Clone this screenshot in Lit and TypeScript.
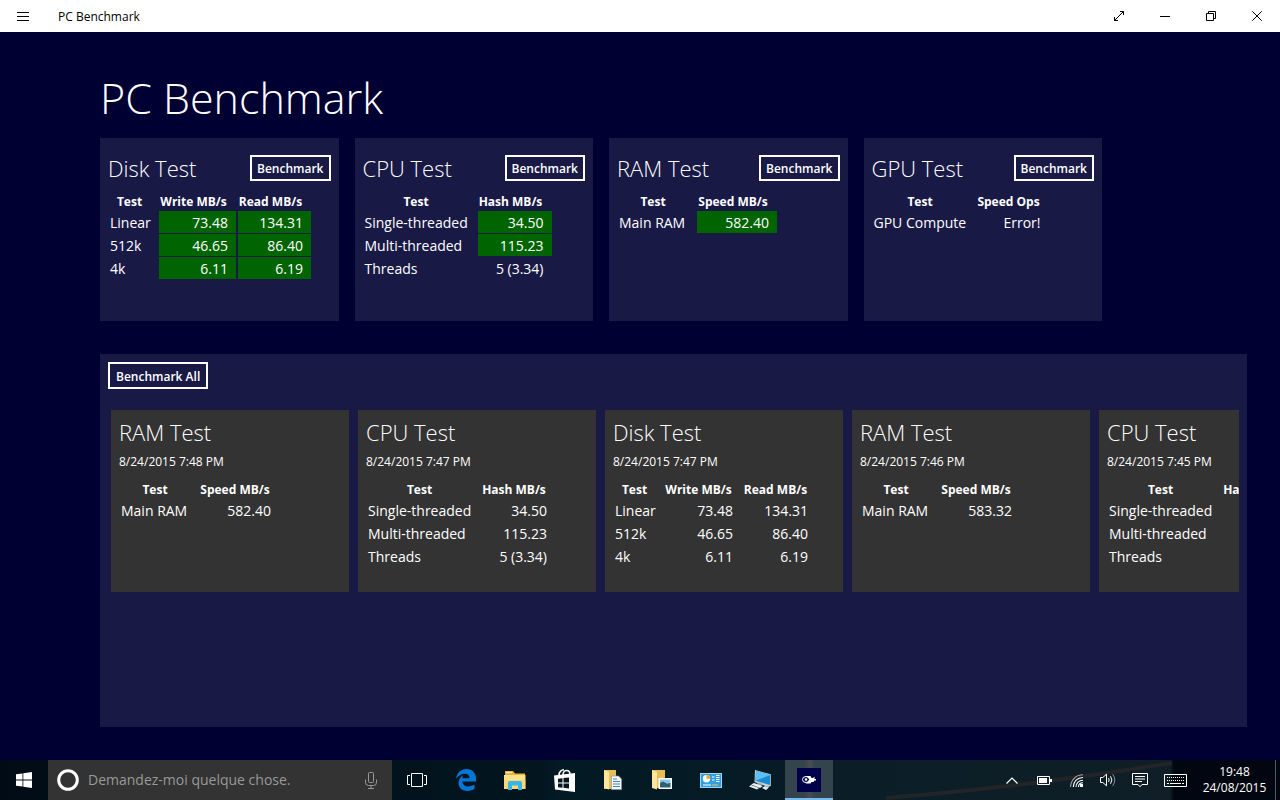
import { LitElement, html, css, svg, nothing } from "lit";
import { customElement, property } from "lit/decorators.js";
import { classMap } from "lit/directives/class-map.js";
import { styleMap } from "lit/directives/style-map.js";

interface Cell {
  text: string;
  good?: boolean;
}
interface Column {
  label: string;
  width: number;
}
interface TestResult {
  title: string;
  date?: string;
  columns: Column[];
  rows: Cell[][];
}

const good = (text: string): Cell => ({ text, good: true });
const plain = (text: string): Cell => ({ text });

const DISK_COLUMNS: Column[] = [
  { label: "Test", width: 47 },
  { label: "Write MB/s", width: 77 },
  { label: "Read MB/s", width: 73 },
];
const CPU_COLUMNS: Column[] = [
  { label: "Test", width: 111 },
  { label: "Hash MB/s", width: 74 },
];
const RAM_COLUMNS: Column[] = [
  { label: "Test", width: 76 },
  { label: "Speed MB/s", width: 80 },
];
const GPU_COLUMNS: Column[] = [
  { label: "Test", width: 101 },
  { label: "Speed Ops", width: 72 },
];

const CURRENT: TestResult[] = [
  {
    title: "Disk Test",
    columns: DISK_COLUMNS,
    rows: [
      [plain("Linear"), good("73.48"), good("134.31")],
      [plain("512k"), good("46.65"), good("86.40")],
      [plain("4k"), good("6.11"), good("6.19")],
    ],
  },
  {
    title: "CPU Test",
    columns: CPU_COLUMNS,
    rows: [
      [plain("Single-threaded"), good("34.50")],
      [plain("Multi-threaded"), good("115.23")],
      [plain("Threads"), plain("5 (3.34)")],
    ],
  },
  {
    title: "RAM Test",
    columns: RAM_COLUMNS,
    rows: [[plain("Main RAM"), good("582.40")]],
  },
  {
    title: "GPU Test",
    columns: GPU_COLUMNS,
    rows: [[plain("GPU Compute"), plain("Error!")]],
  },
];

const cpuRows = (): Cell[][] => [
  [plain("Single-threaded"), plain("34.50")],
  [plain("Multi-threaded"), plain("115.23")],
  [plain("Threads"), plain("5 (3.34)")],
];

const HISTORY: TestResult[] = [
  {
    title: "RAM Test",
    date: "8/24/2015 7:48 PM",
    columns: RAM_COLUMNS,
    rows: [[plain("Main RAM"), plain("582.40")]],
  },
  {
    title: "CPU Test",
    date: "8/24/2015 7:47 PM",
    columns: CPU_COLUMNS,
    rows: cpuRows(),
  },
  {
    title: "Disk Test",
    date: "8/24/2015 7:47 PM",
    columns: DISK_COLUMNS,
    rows: [
      [plain("Linear"), plain("73.48"), plain("134.31")],
      [plain("512k"), plain("46.65"), plain("86.40")],
      [plain("4k"), plain("6.11"), plain("6.19")],
    ],
  },
  {
    title: "RAM Test",
    date: "8/24/2015 7:46 PM",
    columns: RAM_COLUMNS,
    rows: [[plain("Main RAM"), plain("583.32")]],
  },
  {
    title: "CPU Test",
    date: "8/24/2015 7:45 PM",
    columns: CPU_COLUMNS,
    rows: cpuRows(),
  },
];

@customElement("test-card")
class TestCard extends LitElement {
  @property({ attribute: false }) result!: TestResult;

  static styles = css`
    :host {
      display: block;
      box-sizing: border-box;
      min-height: 183px;
      padding: 8px;
      background: #191946;
      color: #fff;
    }
    :host([past]) {
      min-height: 182px;
      background: #333;
    }
    .head {
      display: flex;
      align-items: center;
      justify-content: space-between;
      height: 44px;
    }
    :host([past]) .head {
      height: 28px;
    }
    h2 {
      margin: 0;
      font-size: 22px;
      line-height: 28px;
      font-weight: 300;
    }
    button {
      height: 26px;
      padding: 2px 5px 0;
      border: 2px solid #fff;
      background: transparent;
      color: #fff;
      font: 600 12px/20px var(--ui-font);
    }
    time {
      display: block;
      margin: 8px 0;
      font-size: 12px;
      line-height: 16px;
    }
    table {
      border-spacing: 2px 1px;
      font-size: 14px;
      line-height: 20px;
      white-space: nowrap;
    }
    th {
      box-sizing: border-box;
      padding: 2px 8px 0 0;
      font-size: 12px;
      line-height: 17px;
      font-weight: 700;
      text-align: center;
    }
    td {
      padding: 2px 8px 0 0;
      text-align: right;
    }
    td:first-child {
      padding-right: 6px;
      text-align: left;
    }
    .good {
      background: #006400;
    }
  `;

  render() {
    const r = this.result;
    return html`
      <div class="head">
        <h2>${r.title}</h2>
        ${r.date ? nothing : html`<button type="button">Benchmark</button>`}
      </div>
      ${r.date ? html`<time>${r.date}</time>` : nothing}
      <table>
        <thead>
          <tr>
            ${r.columns.map(
              (c) => html`<th scope="col" style=${styleMap({ width: `${c.width}px` })}>${c.label}</th>`
            )}
          </tr>
        </thead>
        <tbody>
          ${r.rows.map(
            (row) => html`<tr>
              ${row.map(
                (c) => html`<td class=${classMap({ good: !!c.good })}>${c.text}</td>`
              )}
            </tr>`
          )}
        </tbody>
      </table>
    `;
  }
}

const icon = (w: number, h: number, body: unknown) =>
  html`<svg width=${w} height=${h} viewBox="0 0 ${w} ${h}" aria-hidden="true">${body}</svg>`;

const menuIcon = icon(12, 9, svg`<path d="M0 .5h12M0 4.5h12M0 8.5h12" stroke="#000" />`);
const windowButtons = [
  {
    label: "Full screen",
    art: icon(10, 10, svg`<path d="M.5 6v3.500h3.500M6 .5h3.500v3.500M.5 9.500l9-9" fill="none" stroke="#000" />`),
  },
  { label: "Minimize", art: icon(10, 10, svg`<path d="M0 5.500h10" stroke="#000" />`) },
  {
    label: "Restore",
    art: icon(10, 10, svg`<path d="M.5 2.500h7v7h-7zM2.500 2.500v-2h7v7h-2" fill="none" stroke="#000" />`),
  },
  {
    label: "Close",
    art: icon(10, 10, svg`<path d="M.3 .3l9.400 9.400M9.700 .3l-9.400 9.400" stroke="#000" />`),
  },
];

const windowsLogo = icon(
  16,
  16,
  svg`<path fill="#fff" d="M0 2.300L6.500 1.400V7.500H0zM7.300 1.300L16 0V7.500H7.300zM0 8.400H6.500V14.600L0 13.700zM7.300 8.400H16V16L7.300 14.700z" />`
);
const cortanaRing = icon(
  22,
  22,
  svg`<circle cx="11" cy="11" r="9.300" fill="none" stroke="#fff" stroke-width="3" />`
);
const micIcon = icon(
  12,
  17,
  svg`<g fill="none" stroke="#999"><rect x="3.500" y=".5" width="5" height="10" rx="1" /><path d="M.5 7.500v3q0 3 3 3h5q3 0 3-3v-3M6 13.500v3M3 16.500h6" /></g>`
);

const taskIcons = [
  {
    label: "Task View",
    art: icon(20, 14, svg`<path d="M4.500 .5h11v13h-11zM3 2.500H.5v9H3M17 2.500h2.500v9H17" fill="none" stroke="#fff" />`),
  },
  {
    label: "Edge",
    art: icon(
      20,
      22,
      svg`<path fill="#0078d7" d="M0 9.800C.8 4.300 4.600 0 10.600 0c5.700 0 9.400 4.200 9.400 9.400v3H6.400c.2 3.300 2.600 5 6 5 2.300 0 4.300-.6 6.100-1.800v4.500c-2 1.200-4.500 1.800-7.100 1.800C5.800 21.900 2.600 18.500 2.500 14.200c0-3.700 2.100-6.500 5-7.900-.8 1-1.100 2.100-1.200 3h7.300c0-2.800-1.500-4.600-4.700-4.600C5.400 4.700 2 6.800 0 9.800z" />`
    ),
  },
  {
    label: "File Explorer",
    art: icon(
      22,
      19,
      svg`<path fill="#e8b63a" d="M1 0h8l2 2.500h10V9H1z" /><path fill="#fff3c4" d="M2 1h6v1H2z" /><path fill="#ffe08a" d="M0 4h21.500v14H0z" /><path fill="#f5cd62" d="M0 9h21.500v9H0z" opacity=".5" /><path fill="#35b5e9" d="M4 19v-7q0-2 2-2h10q2 0 2 2v7h-4v-4.500H8V19z" />`
    ),
  },
  {
    label: "Store",
    art: icon(
      21,
      23,
      svg`<path fill="#fff" d="M0 6.500L21 4v19L1 20.500z" /><path d="M5 6.500C5 2.500 7.500.8 10 .8M9 6.500c0-3.500 1.500-5 3.500-5s3.500 1.500 3.500 4" fill="none" stroke="#fff" stroke-width="1.600" /><path fill="#03151e" d="M4 9.700l4.500-.5v4.300H4zM9.500 9.100l5.500-.6v5H9.500zM4 14.500h4.500v4.200L4 18.300zM9.500 14.500H15v4.900l-5.500-.6z" />`
    ),
  },
  {
    label: "Documents",
    art: icon(
      18,
      20,
      svg`<path fill="#e9bd55" d="M0 0h12v19H0z" /><path fill="#ffe59c" d="M0 0l5 2v17.500L0 18z" /><path fill="#f6f8fa" stroke="#8d9aa5" stroke-width=".7" d="M7.500 6h7l3 3v10.500h-10z" /><path d="M9 9h4M9 11.500h7M9 14h7M9 16.500h7" stroke="#3c83c5" />`
    ),
  },
  {
    label: "Pictures",
    art: icon(
      20,
      20,
      svg`<path fill="#e9bd55" d="M0 0h13v18H0z" /><path fill="#ffe59c" d="M0 0l5 2v17.500L0 18z" /><path fill="#fff" d="M6.500 8H20v11H6.500z" /><path fill="#8cc4ec" d="M8 9.500h10.500v4H8z" /><path fill="#2d6076" d="M8 13l3-1.500 4 2 3.500-.5v4.500H8z" />`
    ),
  },
  {
    label: "Control Panel",
    art: icon(
      22,
      15,
      svg`<path fill="#9ad5f5" d="M0 0h22v15H0z" /><path fill="#2f9fe0" d="M1 1h20v13H1z" /><circle cx="6.500" cy="5.700" r="3.700" fill="#fff" /><path fill="#f4a524" d="M6.500 5.700V2a3.700 3.700 0 0 1 3.700 3.700z" /><path d="M12 4h2.500M12 7h2.500M16 2.500h3.500M16 4.500h3.500M16 6.500h3.500M16 8.500h3.500M3 12h8" stroke="#fff" /><path d="M12 12h6" stroke="#f4c35a" />`
    ),
  },
  {
    label: "This PC",
    art: icon(
      22,
      20,
      svg`<path fill="#c3d3dc" d="M6 0L21.800 4.300V16L19 17 5.500 12z" /><path fill="#1b8ad3" d="M7 1L21 5v10L6.500 10.800z" /><path fill="#5bbff3" d="M7 1L21 5 6.500 10.800z" /><path fill="#9aa3a8" d="M9 12.500l4 1.300-1 1.700-4-1.300z" /><path fill="#e9ecee" d="M2 14.500l3-1.500 9 3-3 2zM0 16.500l2-1.500 8 3-2 1.500zM13 18l3-2 4 1.500-3 2.500z" />`
    ),
  },
];

const benchmarkIcon = icon(
  24,
  24,
  svg`<path fill="#00004b" d="M0 0h24v24H0z" /><ellipse cx="9" cy="11.500" rx="3.500" ry="3" fill="none" stroke="#fff" /><circle cx="9" cy="11.500" r="1.300" fill="#fff" /><path fill="#fff" d="M9 8h4.500l1 2h2v-1h1v2h1.500v1.500h-1.500l-1 1.500h-2l-1 1.500H8.500l3-2.500 1-2z" />`
);

const trayIcons = [
  {
    label: "Show hidden icons",
    slot: "",
    art: icon(12, 7, svg`<path d="M.5 6.500L6 1l5.500 5.500" fill="none" stroke="#fff" stroke-width="1.200" />`),
  },
  {
    label: "Battery",
    slot: "",
    art: icon(15, 9, svg`<path d="M.5 .5h12v8H.5z" fill="none" stroke="#fff" /><path fill="#fff" d="M2 2h8v5H2zM13 3h2v3h-2z" />`),
  },
  {
    label: "Network",
    slot: "",
    art: icon(
      13,
      13,
      svg`<g fill="none" stroke="#fff" stroke-width="1.100"><path d="M.6 13C.6 6 6 .8 13 .8" opacity=".6" /><path d="M3.300 13C3.300 7.500 7.500 3.500 13 3.500M6 13c0-4 3-6.800 7-6.800M8.500 13c0-2.500 2-4.200 4.500-4.200" /></g><path fill="#fff" d="M10 10h3v3h-3z" />`
    ),
  },
  {
    label: "Volume",
    slot: "",
    art: icon(
      16,
      14,
      svg`<g fill="none" stroke="#fff"><path d="M.5 4.500h2.300L6.500 1.200v11.600L2.800 9.500H.5z" /><path d="M8.500 5q1.400 2 0 4M10.500 3.200q2.800 3.800 0 7.600" /><path d="M12.700 1.200q4.200 5.800 0 11.600" opacity=".5" /></g>`
    ),
  },
  {
    label: "Notifications",
    slot: "",
    art: icon(
      16,
      15,
      svg`<path d="M.5 .5h15v11H10l-2 2.300-2-2.300H.5zM3 3.500h10M3 6h10M3 8.500h7" fill="none" stroke="#fff" />`
    ),
  },
  {
    label: "Touch keyboard",
    slot: "wide",
    art: icon(
      23,
      13,
      svg`<path d="M.5 .5h22v12H.5z" fill="none" stroke="#fff" /><path d="M3 3.500h17M3 6.500h17" stroke="#fff" stroke-dasharray="1 1" /><path d="M3 9.500h2M6 9.500h11M18 9.500h2" stroke="#fff" />`
    ),
  },
];

@customElement("task-bar")
class TaskBar extends LitElement {
  static styles = css`
    :host {
      position: relative;
      display: flex;
      align-items: stretch;
      height: 40px;
      color: #fff;
      background: linear-gradient(90deg, #000b15 0, #02131d 420px, #03151f 540px, #021a24 556px, #061b25 800px, #0b1e27 840px, #0f1e27 1170px, #020610 1174px);
    }
    .streak {
      position: absolute;
      right: 108px;
      bottom: 0;
      width: 336px;
      height: 40px;
    }
    svg {
      display: block;
    }
    button {
      display: flex;
      align-items: center;
      justify-content: center;
      padding: 0;
      border: 0;
      background: transparent;
      color: inherit;
      font: inherit;
    }
    .start {
      width: 48px;
    }
    .search {
      display: flex;
      align-items: center;
      gap: 9px;
      width: 344px;
      box-sizing: border-box;
      padding: 0 15px 0 9px;
      background: #333;
    }
    .search input {
      flex: 1;
      min-width: 0;
      padding: 0;
      border: 0;
      outline: 0;
      background: transparent;
      color: #fff;
      font: 14px/24px var(--ui-font);
    }
    .search input::placeholder {
      color: #999;
      opacity: 1;
    }
    .apps {
      display: flex;
      gap: 1px;
      flex: 1;
      padding-left: 1px;
    }
    .apps button {
      width: 48px;
    }
    .apps .active {
      box-sizing: border-box;
      padding-top: 2px;
      border-bottom: 2px solid #76b9ed;
      background: linear-gradient(90deg, #34444d 40%, #4a4c4f 52%, #34444d 62%);
    }
    .tray {
      position: relative;
      display: flex;
    }
    .tray button {
      width: 32px;
    }
    .tray .wide {
      width: 38px;
    }
    .tray .clock {
      width: 81px;
      text-align: center;
      font-size: 12px;
      line-height: 16px;
    }
    .tray .desktop {
      border-left: 1px solid #4f5a62;
      width: 5px;
    }
  `;

  render() {
    return html`
      <svg class="streak" viewBox="0 0 336 40" preserveAspectRatio="none" aria-hidden="true">
        <path d="M50 38Q180 28 336 3" fill="none" stroke="#30282a" stroke-width="4" opacity=".6" />
      </svg>
      <button type="button" class="start" aria-label="Start">${windowsLogo}</button>
      <div class="search">
        ${cortanaRing}
        <input type="text" aria-label="Recherche" placeholder="Demandez-moi quelque chose." />
        <button type="button" aria-label="Microphone">${micIcon}</button>
      </div>
      <div class="apps">
        ${taskIcons.map(
          (t) => html`<button type="button" aria-label=${t.label}>${t.art}</button>`
        )}
        <button type="button" class="active" aria-label="PC Benchmark">${benchmarkIcon}</button>
      </div>
      <div class="tray">
        ${trayIcons.map(
          (t) => html`<button type="button" class=${t.slot} aria-label=${t.label}>${t.art}</button>`
        )}
        <button type="button" class="clock">19:48<br />24/08/2015</button>
        <button type="button" class="desktop" aria-label="Show desktop"></button>
      </div>
    `;
  }
}

@customElement("app-root")
class AppRoot extends LitElement {
  static styles = css`
    :host {
      --ui-font: "Open Sans", "Noto Sans", sans-serif;
      display: flex;
      flex-direction: column;
      min-height: 100vh;
      background: #000032;
      color: #fff;
      font-family: var(--ui-font);
    }
    .titlebar {
      display: flex;
      align-items: center;
      height: 32px;
      background: #fff;
      color: #000;
      font-size: 12px;
    }
    .titlebar button {
      display: flex;
      align-items: center;
      justify-content: center;
      width: 46px;
      height: 32px;
      padding: 0;
      border: 0;
      background: transparent;
    }
    .titlebar .name {
      flex: 1;
      padding-left: 12px;
    }
    main {
      display: flex;
      flex: 1;
      flex-direction: column;
      padding: 34px 33px 33px 100px;
    }
    h1 {
      margin: 0 0 8px;
      font-size: 43px;
      line-height: 64px;
      font-weight: 300;
    }
    .tests {
      display: grid;
      grid-template-columns: repeat(4, 1fr);
      gap: 16px;
      max-width: 1002px;
    }
    .history {
      flex: 1;
      min-width: 0;
      margin-top: 33px;
      padding: 8px;
      background: #191946;
    }
    .all {
      display: block;
      height: 27px;
      padding: 2px 6px 0;
      border: 2px solid #fff;
      background: transparent;
      color: #fff;
      font: 600 12px/20px var(--ui-font);
    }
    .strip {
      display: flex;
      gap: 9px;
      margin-top: 21px;
      padding-left: 3px;
      overflow: hidden;
    }
    .strip test-card {
      flex: 0 0 238px;
    }
  `;

  render() {
    return html`
      <header class="titlebar">
        <button type="button" aria-label="Menu">${menuIcon}</button>
        <span class="name">PC Benchmark</span>
        ${windowButtons.map(
          (b) => html`<button type="button" aria-label=${b.label}>${b.art}</button>`
        )}
      </header>
      <main>
        <h1>PC Benchmark</h1>
        <section class="tests">
          ${CURRENT.map((r) => html`<test-card .result=${r}></test-card>`)}
        </section>
        <section class="history">
          <button type="button" class="all">Benchmark All</button>
          <div class="strip">
            ${HISTORY.map((r) => html`<test-card past .result=${r}></test-card>`)}
          </div>
        </section>
      </main>
      <task-bar></task-bar>
    `;
  }
}
